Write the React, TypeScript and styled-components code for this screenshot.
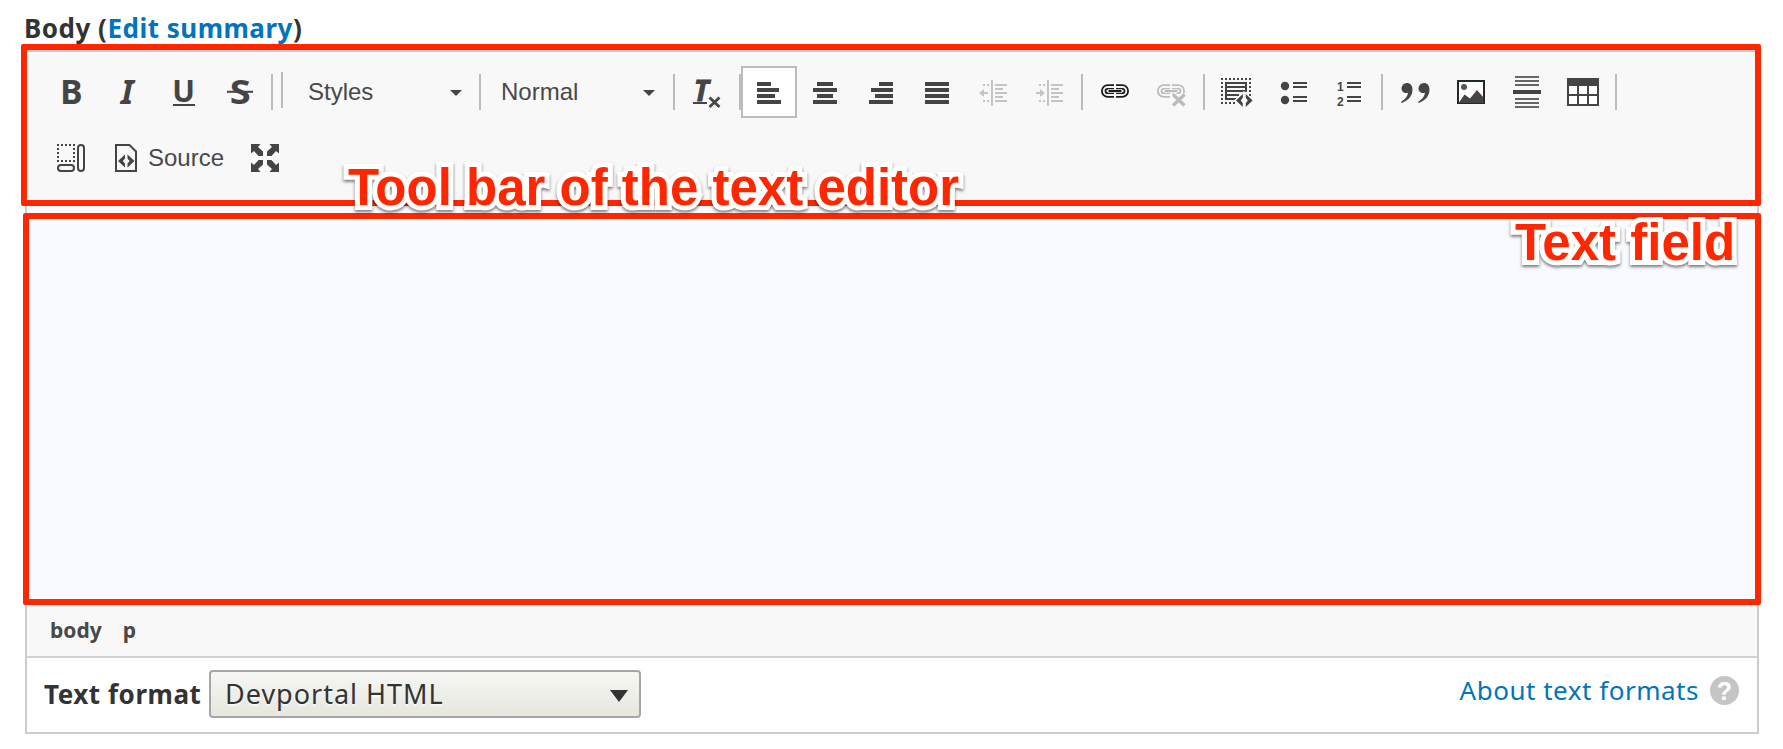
import React from 'react';
import styled, { createGlobalStyle } from 'styled-components';

const INK = '#444';
const RED = '#ff2600';
const UI_FONT = '"Noto Sans", "Open Sans", sans-serif';
const SANS = '"Liberation Sans", Arial, sans-serif';

const GlobalStyle = createGlobalStyle`
  * { box-sizing: border-box; }
  body { margin: 0; background: #fff; color: #333; font-family: ${UI_FONT}; }
`;

const Page = styled.main`
  width: 1783px;
  height: 749px;
  overflow: hidden;
  padding: 10px 24px 0 25px;
`;

const FieldLabel = styled.div`
  height: 40px;
  margin-left: -1px;
  font-size: 26px;
  font-weight: 700;
  line-height: 36px;
  letter-spacing: 0.5px;
  white-space: nowrap;
`;

const Link = styled.a`
  color: #0074bd;
  text-decoration: none;
`;

const Editor = styled.section`
  position: relative;
  width: 1734px;
  height: 684px;
  border: 2px solid #ccc;
  display: flex;
  flex-direction: column;
`;

const Toolbar = styled.div`
  height: 151px;
  padding: 14px 0 0 16px;
  background: #f8f8f8;
  display: flex;
  flex-direction: column;
  gap: 14px;
`;

const ToolRow = styled.div`
  display: flex;
  align-items: center;
  height: 52px;
`;

const ToolButton = styled.button<{ $active?: boolean; $wide?: boolean }>`
  appearance: none;
  height: 52px;
  width: ${p => (p.$wide ? 138 : 56)}px;
  padding: 0 ${p => (p.$active ? 10 : 12)}px;
  border: ${p => (p.$active ? '2px solid #bcbcbc' : '0')};
  background: ${p => (p.$active ? '#fff' : 'transparent')};
  display: flex;
  align-items: center;
  flex: none;
  gap: 5px;
  color: #484848;
  font: 24px/52px ${SANS};
`;

const Separator = styled.span<{ $before?: number; $after?: number; $raised?: boolean }>`
  flex: none;
  width: 2px;
  height: 36px;
  margin: 0 ${p => p.$after ?? 4}px ${p => (p.$raised ? 4 : 0)}px ${p => p.$before ?? 4}px;
  background: #bcbcbc;
`;

const Combo = styled.div`
  flex: none;
  width: 192px;
  height: 52px;
  padding: 0 18px 0 20px;
  display: flex;
  align-items: center;
  justify-content: space-between;
  color: #484848;
  font: 24px/52px ${SANS};
`;

const Caret = styled.span`
  border: solid transparent;
  border-width: 6px 6px 0;
  border-top-color: ${INK};
  margin-top: 2px;
`;

const Glyph = styled.svg`
  display: block;
  flex: none;
  width: 32px;
  height: 32px;
  overflow: visible;
  fill: ${INK};
`;

const Letter = styled.text<{ $italic?: boolean }>`
  font-family: ${UI_FONT};
  font-weight: 700;
  font-style: ${p => (p.$italic ? 'italic' : 'normal')};
`;

const Digit = styled.text`
  font: 700 12px ${SANS};
`;

const TextArea = styled.div`
  flex: 1;
  background: #f8faff;
`;

const PathBar = styled.div`
  height: 56px;
  padding: 13px 0 0 23px;
  display: flex;
  gap: 21px;
  background: #f8f8f8;
  border-bottom: 2px solid #d1d1d1;
  color: #484848;
  font-size: 21px;
  font-weight: 700;
  line-height: 30px;
`;

const FormatRow = styled.div`
  height: 74px;
  padding: 12px 18px 0 17px;
  display: flex;
  align-items: flex-start;
`;

const FormatLabel = styled.label`
  width: 165px;
  padding-top: 6px;
  font-size: 26px;
  font-weight: 700;
  line-height: 36px;
  letter-spacing: 0.55px;
  white-space: nowrap;
`;

const Select = styled.div`
  width: 432px;
  height: 48px;
  padding: 0 11px 0 14px;
  border: 2px solid #a6a6a6;
  border-radius: 4px;
  background: linear-gradient(#f6f6f3, #e7e7df);
  display: flex;
  align-items: center;
  justify-content: space-between;
  font-size: 27px;
  line-height: 44px;
  letter-spacing: 1px;
  text-shadow: 0 2px 1px rgba(255, 255, 255, 0.6);
`;

const SelectArrow = styled.span`
  border: solid transparent;
  border-width: 12px 9px 0;
  border-top-color: #333;
  margin-top: 4px;
`;

const Help = styled.div`
  margin-left: auto;
  padding-top: 2px;
  display: flex;
  align-items: center;
  gap: 11px;
  font-size: 26px;
  line-height: 36px;
  letter-spacing: 0.52px;
`;

const HelpBadge = styled.span`
  width: 29px;
  height: 29px;
  margin-top: 1px;
  border-radius: 50%;
  background: #c5c5c5;
  color: #fff;
  font: 700 25px/30px ${SANS};
  letter-spacing: 0;
  text-align: center;
`;

const Highlight = styled.div<{ $area: 'toolbar' | 'field' }>`
  position: absolute;
  border: 6px solid ${RED};
  border-radius: 2px;
  ${p =>
    p.$area === 'toolbar'
      ? 'left: -6px; top: -8px; width: 1740px; height: 162px;'
      : 'left: -4px; top: 161px; width: 1738px; height: 392px;'}
`;

const Callout = styled.div<{ $area: 'toolbar' | 'field' }>`
  position: absolute;
  ${p => (p.$area === 'toolbar' ? 'left: 321px; top: 110px;' : 'left: 1488px; top: 165px;')}
  color: ${RED};
  font: 700 51px/51px ${SANS};
  white-space: nowrap;
  -webkit-text-stroke: 10px #fff;
  paint-order: stroke fill;
  stroke-linejoin: round;
  filter: drop-shadow(0 2px 1.5px rgba(0, 0, 0, 0.5));
`;

type Bar = [x: number, y: number, w: number, h: number];
const Bars = ({ of, fill }: { of: Bar[]; fill?: string }) => (
  <>
    {of.map(([x, y, w, h]) => (
      <rect key={`${x}-${y}`} x={x} y={y} width={w} height={h} fill={fill} />
    ))}
  </>
);

const BoldIcon = () => (
  <Glyph><Letter x={5.2} y={28} fontSize={33.5}>B</Letter></Glyph>
);
const ItalicIcon = () => (
  <Glyph><Letter $italic x={9.8} y={28} fontSize={33.5}>I</Letter></Glyph>
);
const UnderlineIcon = () => (
  <Glyph>
    <Letter x={5.2} y={25.5} fontSize={30}>U</Letter>
    <Bars of={[[6, 28, 22, 2]]} />
  </Glyph>
);
const StrikeIcon = () => (
  <Glyph>
    <Letter x={6.8} y={28} fontSize={33.5} textLength={21} lengthAdjust="spacingAndGlyphs">S</Letter>
    <Bars of={[[4, 14.8, 26, 2]]} />
  </Glyph>
);
const ClearFormatIcon = () => (
  <Glyph>
    <Letter $italic x={2.8} y={24.5} fontSize={28.5} stroke={INK} strokeWidth={0.8}>T</Letter>
    <Bars of={[[2, 26, 14, 2]]} />
    <path d="M18.5 21.5l10 9.5M28.5 21.5l-10 9.5" stroke={INK} strokeWidth={2.8} />
  </Glyph>
);
const AlignIcon = ({ of }: { of: [number, number][] }) => (
  <Glyph><Bars of={of.map(([x, w], i) => [x, 6 + i * 6, w, 4])} /></Glyph>
);
const IndentIcon = ({ out }: { out?: boolean }) => (
  <Glyph>
    <Bars
      fill="#c4c4c4"
      of={[
        [14, 4, 2, 26], [18, 8, 12, 2], [18, 12, 8, 2], [18, 16, 12, 2], [18, 20, 8, 2], [18, 24, 12, 2],
        [6, 8, 2, 2], [10, 8, 2, 2], [6, 24, 2, 2], [10, 24, 2, 2], [3, 16, 8, 2],
      ]}
    />
    <path fill="#c4c4c4" d={out ? 'M2 17l5-4v8z' : 'M12 17l-5-4v8z'} />
  </Glyph>
);
const CHAIN = 'M15 11H8.7a4 4 0 0 0 0 8H15M17 11h6.3a4 4 0 0 1 0 8H17';
const LinkIcon = () => (
  <Glyph fillOpacity={0}>
    <path d={CHAIN} stroke="#1c1c1c" strokeWidth={5.4} />
    <path d={CHAIN} stroke="#f4f4f4" strokeWidth={1.8} />
    <path d="M9 15h14" stroke="#f4f4f4" strokeWidth={3.6} />
    <path d="M9.5 15h13" stroke="#1c1c1c" strokeWidth={2.2} />
  </Glyph>
);
const UnlinkIcon = () => (
  <Glyph fillOpacity={0}>
    <path d={CHAIN} stroke="#bcbcbc" strokeWidth={5.4} />
    <path d={CHAIN} stroke="#f8f8f8" strokeWidth={1.8} />
    <path d="M9 15h14" stroke="#f8f8f8" strokeWidth={3.6} />
    <path d="M9.5 15h13" stroke="#bcbcbc" strokeWidth={2.2} />
    <path d="M17.500 18.500l12 11M29.500 18.500l-12 11" stroke="#f8f8f8" strokeWidth={6.5} />
    <path d="M18 18.500l11.500 11M29.500 18.500l-11.500 11" stroke="#bcbcbc" strokeWidth={3.4} />
  </Glyph>
);
const TemplateIcon = () => (
  <Glyph>
    <path
      fill="none"
      stroke={INK}
      strokeWidth={2}
      strokeDasharray="2 2"
      d="M0 3h30M1 6v22M29 6v14M4 27h11"
    />
    <path fill="none" stroke={INK} strokeWidth={2} d="M5 6v18M4 7h22M25 6v10M6 11h18M4 15h22M6 19h12M4 23h11" />
    <path fill="#f8f8f8" d="M23 15l11 9.500-11 9.500-10-9.500z" />
    <path d="M21.800 18v3.800l-2 2.700 2 2.700V31l-6.800-6.500zM24.800 18v3.800l2 2.700-2 2.700V31l6.800-6.500z" />
  </Glyph>
);
const LIST_LINES: [number, number][] = [[6, 2], [10, 2], [20, 2], [24, 2]];
const BulletIcon = () => (
  <Glyph>
    <circle cx={8} cy={10} r={4.2} />
    <circle cx={8} cy={24} r={4.2} />
    <Bars of={LIST_LINES.map(([y, h]) => [16, y, 14, h])} />
  </Glyph>
);
const NumberIcon = () => (
  <Glyph>
    <Digit x={4} y={15}>1</Digit>
    <Digit x={4} y={29.5}>2</Digit>
    <Bars of={LIST_LINES.map(([y, h]) => [14, y, 14, h])} />
  </Glyph>
);
const QuoteIcon = () => (
  <Glyph>
    {[0, 17].map(x => (
      <path
        key={x}
        transform={`translate(${x} 0)`}
        d="M7.800 7a5.400 5.400 0 0 0-5.300 5.200c0 2.900 2 4.900 4.700 4.900.7 0 1.300-.1 1.800-.3-.4 3.600-2.600 6.400-7 9.200l.8 1c7.200-2.600 10.700-7.600 10.700-13.400C13.500 9.500 11.200 7 7.800 7z"
      />
    ))}
  </Glyph>
);
const ImageIcon = () => (
  <Glyph>
    <rect x={3} y={5} width={26} height={22} fill="#fff" stroke="#1f2a2d" strokeWidth={2} />
    <circle cx={9} cy={11} r={3} fill="#555" />
    <path d="M4 26.500l5.500-8 5.500 4 7-8.500 6.500 7.500V27H4z" />
  </Glyph>
);
const RuleIcon = () => (
  <Glyph>
    <Bars fill="#666" of={[0, 4, 8, 22, 26, 30].map(y => [4, y, 24, 2])} />
    <Bars of={[[2, 14, 28, 4]]} />
  </Glyph>
);
const TableIcon = () => (
  <Glyph>
    <rect y={2} width={32} height={28} />
    <Bars
      fill="#fff"
      of={[10, 20].flatMap(y => [[2, y], [12, y], [22, y]]).map(([x, y]) => [x, y, 8, 8] as Bar)}
    />
  </Glyph>
);
const BlocksIcon = () => (
  <Glyph>
    <g fill="none" stroke={INK} strokeWidth={2}>
      <path strokeDasharray="2 2" d="M2 3h18M3 6v14M19 6v14M6 19h12" />
      <rect x={3} y={23} width={16} height={6} rx={3} />
      <rect x={23} y={3} width={6} height={26} rx={3} />
    </g>
  </Glyph>
);
const SourceIcon = () => (
  <Glyph>
    <path fill="none" stroke={INK} strokeWidth={2} d="M5 3h13.500L25 9.500V29H5z" />
    <path d="M14 12.500v4l-2.200 2.500 2.200 2.500v4L7 19zM16.500 12.500v4l2.200 2.500-2.200 2.500v4l7-6.500z" />
  </Glyph>
);
const MaximizeIcon = () => (
  <Glyph>
    {[0, 90, 180, 270].map(a => (
      <path key={a} transform={`rotate(${a} 16 16)`} d="M2 2h9.500L9 5l5 4.500v4.500H9.500L5 9l-3 2.500z" />
    ))}
  </Glyph>
);

export default function App() {
  return (
    <Page>
      <GlobalStyle />
      <FieldLabel>
        Body (<Link>Edit summary</Link>)
      </FieldLabel>
      <Editor>
        <Toolbar>
          <ToolRow>
            <ToolButton><BoldIcon /></ToolButton>
            <ToolButton><ItalicIcon /></ToolButton>
            <ToolButton><UnderlineIcon /></ToolButton>
            <ToolButton><StrikeIcon /></ToolButton>
            <Separator $after={0} />
            <Separator $before={8} $after={5} $raised />
            <Combo>Styles<Caret /></Combo>
            <Separator $before={-1} $after={0} />
            <Combo>Normal<Caret /></Combo>
            <Separator $before={0} />
            <ToolButton><ClearFormatIcon /></ToolButton>
            <Separator $after={0} />
            <ToolButton $active><AlignIcon of={[[4, 14], [4, 22], [4, 18], [4, 24]]} /></ToolButton>
            <ToolButton><AlignIcon of={[[8, 16], [4, 24], [8, 16], [4, 24]]} /></ToolButton>
            <ToolButton><AlignIcon of={[[14, 14], [6, 22], [10, 18], [4, 24]]} /></ToolButton>
            <ToolButton><AlignIcon of={[[4, 24], [4, 24], [4, 24], [4, 24]]} /></ToolButton>
            <ToolButton><IndentIcon out /></ToolButton>
            <ToolButton><IndentIcon /></ToolButton>
            <Separator />
            <ToolButton><LinkIcon /></ToolButton>
            <ToolButton><UnlinkIcon /></ToolButton>
            <Separator />
            <ToolButton><TemplateIcon /></ToolButton>
            <ToolButton><BulletIcon /></ToolButton>
            <ToolButton><NumberIcon /></ToolButton>
            <Separator />
            <ToolButton><QuoteIcon /></ToolButton>
            <ToolButton><ImageIcon /></ToolButton>
            <ToolButton><RuleIcon /></ToolButton>
            <ToolButton><TableIcon /></ToolButton>
            <Separator />
          </ToolRow>
          <ToolRow>
            <ToolButton><BlocksIcon /></ToolButton>
            <ToolButton $wide><SourceIcon />Source</ToolButton>
            <ToolButton><MaximizeIcon /></ToolButton>
          </ToolRow>
        </Toolbar>
        <TextArea />
        <PathBar>
          <span>body</span>
          <span>p</span>
        </PathBar>
        <FormatRow>
          <FormatLabel>Text format</FormatLabel>
          <Select>Devportal HTML<SelectArrow /></Select>
          <Help>
            <Link>About text formats</Link>
            <HelpBadge>?</HelpBadge>
          </Help>
        </FormatRow>
        <Highlight $area="toolbar" />
        <Highlight $area="field" />
        <Callout $area="toolbar">Tool bar of the text editor</Callout>
        <Callout $area="field">Text field</Callout>
      </Editor>
    </Page>
  );
}
